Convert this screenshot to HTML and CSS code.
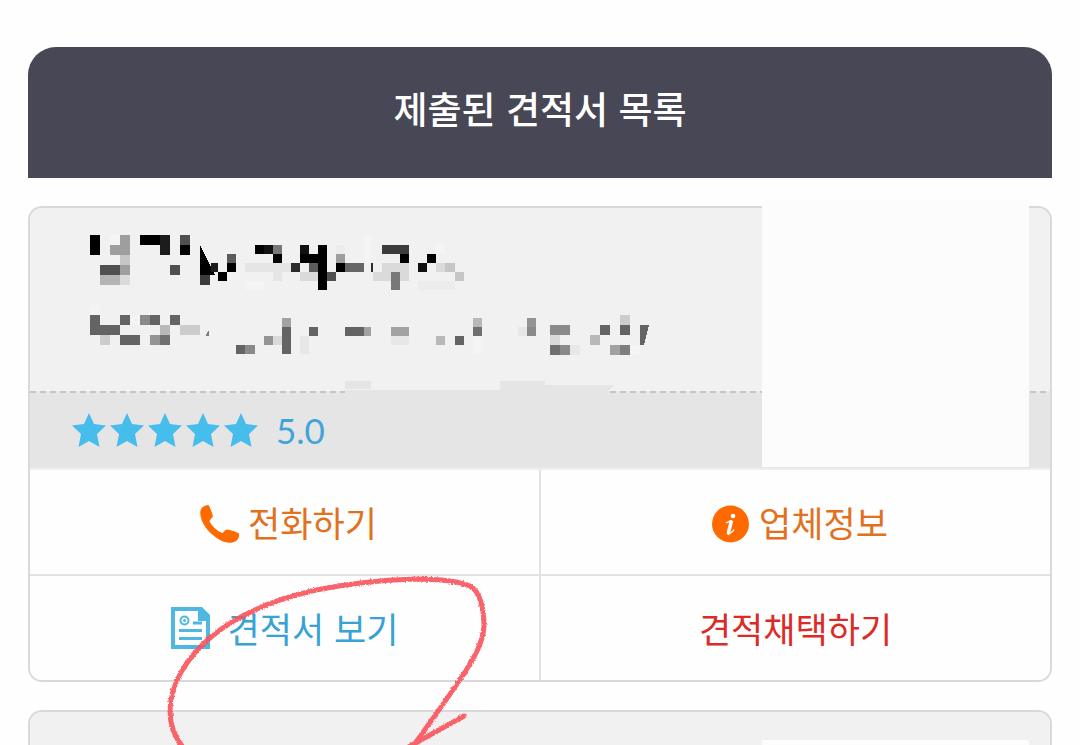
FILE: index.html
```html
<!DOCTYPE html>
<html lang="ko">
<head>
    <meta charset="UTF-8">
    <meta name="viewport" content="width=device-width, initial-scale=1.0">
    <title>제출된 견적서 목록</title>
    <link rel="stylesheet" href="styles.css">
</head>
<body>
    <main class="page">
        <h1 class="page-title">제출된 견적서 목록</h1>

        <section class="card">
            <div class="company">
                <!-- 업체명 모자이크 -->
                <svg class="mosaic" width="574" height="183" viewBox="90 208 574 183" shape-rendering="crispEdges" aria-hidden="true">
                    <g fill="#000">
                        <path d="M90 235h10v20h-10zM140 235h20v10h-20zM180 245h10v10h-10zM200 245l15 30h-15z"/>
                        <path d="M218 272h9v9h-9zM227 263h9v9h-9zM255 245h9v9h-9zM273 254h9v9h-9z"/>
                        <path d="M300 254h18v9h-18zM318 245h9v45h-9zM336 263h9v9h-9zM400 254h9v9h-9zM427 254h9v9h-9z"/>
                    </g>
                    <path fill="#111" d="M264 245h9v9h-9zM300 245h9v9h-9zM418 263h9v9h-9z"/>
                    <path fill="#1c1c1c" d="M160 235h10v20h-10zM211 263h7v9h-7z"/>
                    <path fill="#2b2b2b" d="M291 263h9v9h-9zM371 263h2v9h-2z"/>
                    <path fill="#3c3c3c" d="M382 245h27v9h-27zM200 275h10v10h-10z"/>
                    <path fill="#505050" d="M100 265h20v10h-20zM170 265h10v10h-10zM180 235h10v10h-10zM327 272h9v9h-9z"/>
                    <path fill="#5c5c5c" d="M227 254h9v9h-9zM309 263h9v9h-9z"/>
                    <path fill="#666" d="M345 263h19v9h-19z"/>
                    <path fill="#787878" d="M273 245h9v9h-9zM391 272h9v18h-9z"/>
                    <path fill="#9e9e9e" d="M110 245h10v10h-10zM120 235h10v20h-10zM120 265h10v10h-10zM336 254h9v9h-9z"/>
                    <path fill="#b4b4b4" d="M100 275h20v10h-20z"/>
                    <path fill="#c6c6c6" d="M120 255h10v10h-10zM445 263h10v9h-10zM455 272h9v9h-9z"/>
                    <path fill="#dadada" d="M120 275h10v10h-10zM300 272h18v9h-18zM382 263h27v9h-27zM373 272h18v9h-18zM400 272h9v9h-9zM436 263h9v9h-9z"/>
                    <path fill="#e5e5e5" d="M245 263h46v9h-46zM273 272h9v9h-9z"/>
                    <path fill="#ececec" d="M418 281h37v9h-37zM336 245h9v9h-9z"/>
                    <path fill="#f4f4f4" d="M110 235h10v10h-10zM245 281h19v9h-19zM364 236h7v27h-7zM436 245h9v9h-9z"/>

                    <!-- 주소 모자이크 -->
                    <g fill="#646464">
                        <path d="M90 315h10v20h-10zM100 325h20v10h-20zM120 315h10v10h-10zM150 315h10v10h-10zM170 315h10v10h-10zM120 335h20v10h-20z"/>
                        <path d="M236 345h9v9h-9zM282 327h9v27h-9zM309 327h9v9h-9zM345 327h19v9h-19zM455 336h9v9h-9z"/>
                        <path d="M600 325h10v10h-10zM620 325h10v10h-10zM640 325h9l-5 20h-4z"/>
                    </g>
                    <path fill="#707070" d="M160 335h10v10h-10zM473 327h9v9h-9zM550 345h10v10h-10z"/>
                    <path fill="#7e7e7e" d="M620 345h10v10h-10zM206 335l3 -5v6h-3z"/>
                    <path fill="#8a8a8a" d="M140 315h10v10h-10zM245 345h10v9h-10zM527 327h9v9h-9zM550 325h20v10h-20zM560 345h10v10h-10z"/>
                    <path fill="#949494" d="M150 335h10v10h-10zM264 336h9v9h-9zM527 318h9v9h-9z"/>
                    <path fill="#a2a2a2" d="M282 318h9v9h-9zM364 327h7v9h-7zM391 327h18v9h-18zM610 345h10v10h-10z"/>
                    <path fill="#b8b8b8" d="M160 325h10v10h-10zM436 336h9v9h-9zM473 318h9v9h-9zM590 335h10v10h-10z"/>
                    <path fill="#ccc" d="M180 325h20v10h-20zM100 335h10v10h-10zM620 315h10v10h-10z"/>
                    <path fill="#dadada" d="M273 336h9v9h-9zM550 335h10v10h-10z"/>
                    <path fill="#e7e7e7" d="M300 336h9v18h-9zM391 336h18v9h-18zM518 327h9v9h-9zM570 345h10v10h-10z"/>
                    <path fill="#f4f4f4" d="M90 305h10v10h-10zM130 315h10v10h-10zM473 336h9v18h-9zM630 345h10v10h-10z"/>

                    <!-- 점선 위로 번진 부분 -->
                    <path fill="#e5e5e5" d="M345 381h26v8h-26zM345 390h155v-9h45v4h70l-9 8v1h-261z"/>
                </svg>
                <div class="cover"></div>
            </div>

            <div class="rating">
                <svg class="stars" width="186" height="34" viewBox="0 0 186 34" role="img" aria-label="별점 5점">
                    <defs>
                        <path id="star" d="M17 0l5 11 12 1.500-9 8.500 2.500 13L17 28 6.500 34 9 21 0 12.500 12 11z"/>
                    </defs>
                    <use href="#star"/>
                    <use href="#star" x="38"/>
                    <use href="#star" x="76"/>
                    <use href="#star" x="114"/>
                    <use href="#star" x="152"/>
                </svg>
                <span class="score">5.0</span>
            </div>

            <div class="actions">
                <button type="button" class="action contact">
                    <svg class="contact-icon" width="40" height="40" viewBox="0 0 40 40" aria-hidden="true">
                        <path fill="#ff6a00" d="M1 5C3 2 6 1 8.500 1c1 1 3.500 8 4.500 11-.5 2-3 3-3.500 5 2 5 8 10.500 13 12 1.500-.5 2-3 4-3.500 4 .3 10 2.500 12.500 4 .5 3-.5 5.500-3 7.500-4 3-11 2-16-1C11 31 3 22 1 14 0 10 0 7 1 5z"/>
                    </svg>
                    <span>전화하기</span>
                </button>
                <button type="button" class="action contact">
                    <svg class="contact-icon" width="40" height="40" viewBox="0 0 40 40" aria-hidden="true">
                        <circle cx="19.500" cy="20" r="18.500" fill="#ff6a00"/>
                        <circle cx="22" cy="12" r="2.300" fill="#fff"/>
                        <path fill="none" stroke="#fff" stroke-width="1.300" d="M15 19c2-1 4-2 6-2.500M17.500 29.500c2 0 4-1.500 5.500-4"/>
                        <path fill="none" stroke="#fff" stroke-width="3.500" d="M20.500 16.500L17.500 28.500q0 1 1 1"/>
                    </svg>
                    <span>업체정보</span>
                </button>
                <button type="button" class="action view">
                    <svg width="40" height="42" viewBox="0 0 40 42" aria-hidden="true">
                        <path fill="#4db8e2" fill-rule="evenodd" d="M0 0h31l8 8v34H0zM4 4v34h31V14h-8V4z"/>
                        <g fill="none" stroke="#4db8e2">
                            <circle cx="13.500" cy="13.500" r="4" stroke-width="2"/>
                            <path stroke-width="3" d="M22 16h9M8 23.500h23M8 31.500h23"/>
                        </g>
                        <circle cx="13.500" cy="13.500" r="1.500" fill="#4db8e2"/>
                    </svg>
                    <span>견적서 보기</span>
                    <!-- 빨간 펜 표시 -->
                    <svg class="pen" width="340" height="170" viewBox="160 575 340 170" aria-hidden="true">
                        <filter id="grain" x="-5%" y="-5%" width="110%" height="110%">
                            <feTurbulence type="fractalNoise" baseFrequency="0.6" numOctaves="2" seed="4"/>
                            <feDisplacementMap in="SourceGraphic" scale="3" xChannelSelector="R" yChannelSelector="G"/>
                        </filter>
                        <path filter="url(#grain)" d="M186 750C175 738 170 724 170 710C170 684 186 657 211 636C238 613 276 598 316 589C350 582 385 579 415 578C440 578 458 580 470 585C480 590 484 608 484 625C483 642 474 657 463 674C450 694 436 713 416 741M464 715L405 748"/>
                    </svg>
                </button>
                <button type="button" class="action accept">견적채택하기</button>
            </div>
        </section>

        <section class="card">
            <div class="company">
                <div class="cover cover-inner"></div>
            </div>
        </section>
    </main>
</body>
</html>
```

FILE: styles.css
```css
* {
    box-sizing: border-box;
}
body {
    margin: 0;
    background-color: #fefefe;
    font-family: "Noto Sans CJK KR", sans-serif;
}
.page {
    height: 100vh;
    padding: 47px 28px 0;
    overflow: hidden;
}
.page-title {
    margin: 0 0 28px;
    padding: 33px 20px 42px;
    border-radius: 28px 28px 0 0;
    background-color: #474755;
    color: #fff;
    font-size: 37px;
    font-weight: 500;
    line-height: 56px;
    text-align: center;
}
.card {
    margin-bottom: 28px;
    border: 2px solid #d9d9d9;
    border-radius: 14px;
    background-color: #fefefe;
}
.company {
    position: relative;
    min-height: 183px;
    padding-left: 60px;
    border-radius: 12px 12px 0 0;
    background-color: #f1f1f1;
}
.mosaic {
    position: relative;
    z-index: 1;
    display: block;
    overflow: visible;
}
.cover {
    position: absolute;
    z-index: 1;
    top: -8px;
    right: 21px;
    width: 267px;
    height: 267px;
    background-color: #fcfcfc;
}
.cover-inner {
    top: 28px;
}
.rating {
    display: flex;
    align-items: center;
    gap: 18px;
    height: 77px;
    padding: 0 42px;
    background: repeating-linear-gradient(to right, #c6c6c6 0 6px, #e8e8e8 6px 10px) top / 100% 2px no-repeat #e5e5e5;
}
.stars {
    fill: #47bdec;
}
.score {
    color: #3fa5d8;
    font-family: Lato, sans-serif;
    font-size: 35px;
    line-height: 40px;
}
.actions {
    display: grid;
    grid-template-columns: 1fr 1fr;
    gap: 2px;
    border-top: 2px solid #eee;
    border-radius: 0 0 12px 12px;
    background-color: #e2e2e2;
}
.action {
    position: relative;
    display: flex;
    align-items: center;
    justify-content: center;
    height: 104px;
    padding: 0;
    border: none;
    background-color: #fefefe;
    font-family: inherit;
    font-size: 35px;
    line-height: 52px;
    cursor: pointer;
}
.contact {
    gap: 8px;
    padding-left: 8px;
    color: #e2711d;
}
.contact-icon {
    margin-top: 4px;
}
.view {
    gap: 17px;
    border-bottom-left-radius: 12px;
    color: #36a3d3;
}
.accept {
    border-bottom-right-radius: 12px;
    color: #dc2b27;
}
.pen {
    position: absolute;
    z-index: 2;
    top: 0;
    left: 130px;
    fill: none;
    stroke: #f9535c;
    stroke-width: 5px;
    stroke-linecap: round;
    opacity: 0.9;
    pointer-events: none;
}
```
